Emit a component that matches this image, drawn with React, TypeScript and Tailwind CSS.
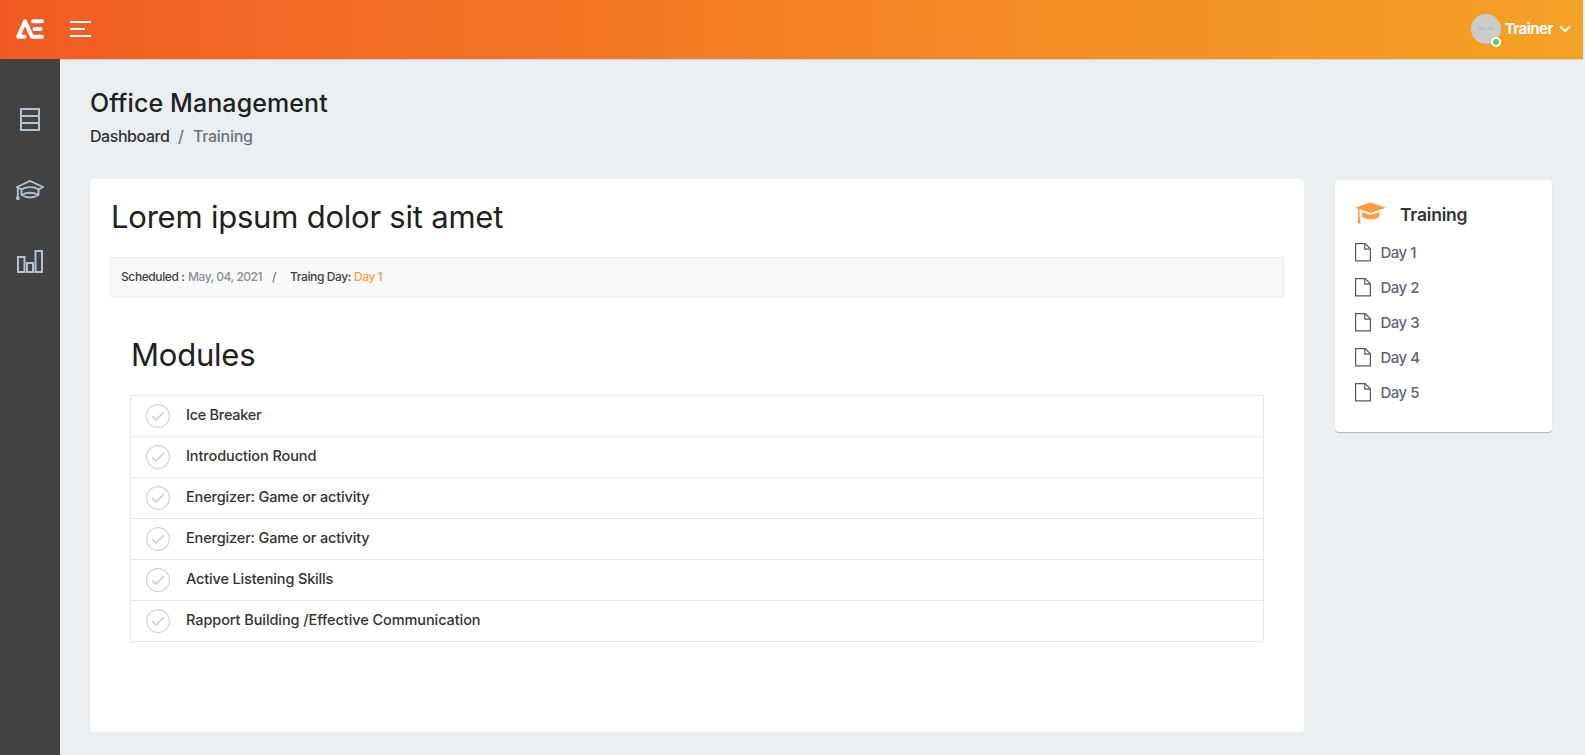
import React from "react";

const modules = [
  { name: "Ice Breaker", cls: "tracking-[-0.28px]" },
  { name: "Introduction Round", cls: "tracking-[-0.1px]" },
  { name: "Energizer: Game or activity", cls: "tracking-[-0.15px]" },
  { name: "Energizer: Game or activity", cls: "tracking-[-0.15px]" },
  { name: "Active Listening Skills", cls: "tracking-[-0.15px]" },
  { name: "Rapport Building /Effective Communication", cls: "tracking-[-0.08px]" },
];

const days = ["Day 1", "Day 2", "Day 3", "Day 4", "Day 5"];

function Logo() {
  return (
    <svg width="28" height="20" viewBox="0 0 28 20" fill="none" stroke="#fff" strokeWidth="4" strokeLinecap="round" strokeLinejoin="round">
      <path d="M8.500 17.7H2.2L9 2.4L16 17.7H26" />
      <path d="M17 2.3H26M18.5 10H24.5" />
    </svg>
  );
}

function FileIcon() {
  return (
    <svg width="16" height="19" viewBox="0 0 16 19" fill="none" stroke="#5a5a5a" strokeWidth="1.2">
      <path d="M0.6 0.6H10.2L15.4 5.8V17.9H0.6Z" />
      <path d="M9.8 0.6V6.2H15.4" />
    </svg>
  );
}

function CheckCircle() {
  return (
    <svg width="24" height="24" viewBox="0 0 24 24" fill="none" stroke="#cfcfcf">
      <circle cx="12" cy="12" r="11.4" strokeWidth="1.1" />
      <path d="M6.3 12.3L10 16L17.8 8.2" strokeWidth="1.7" />
    </svg>
  );
}

export default function App() {
  return (
    <div className="flex h-[755px] w-full flex-col overflow-hidden bg-[#ebeff2] font-['Inter',sans-serif] text-[#212121]">
      <header className="mr-0.5 flex h-[59px] shrink-0 items-center bg-linear-to-r from-[#f15a24] to-[#f4a226] pb-0.5 pl-4 pr-3 text-white">
        <Logo />
        <svg className="ml-[26px]" width="21" height="16" viewBox="0 0 21 16" fill="#fff">
          <path d="M0 0H21V2H0ZM0 7H15V9H0ZM0 14H21V16H0Z" />
        </svg>
        <div className="ml-auto flex items-center">
          <div className="relative h-[30px] w-[30px] rounded-full bg-[#ccc]">
            <span className="absolute left-0 top-3 w-full text-center text-[4px] leading-[6px] text-[#aaa]">30 x 30</span>
            <span className="absolute -bottom-[3px] right-0 h-2.5 w-2.5 rounded-full border-2 border-white bg-[#55ce63]" />
          </div>
          <span className="ml-1 text-[15px] font-bold leading-5 tracking-[-0.55px]">Trainer</span>
          <svg className="ml-1.5" width="12" height="8" viewBox="0 0 12 8" fill="none" stroke="#fff" strokeWidth="2">
            <path d="M1 1.2L6 6.2L11 1.2" />
          </svg>
        </div>
      </header>
      <div className="flex min-h-0 flex-1">
        <nav className="flex w-[60px] shrink-0 flex-col items-center bg-[#424242] pt-[49px] text-[#b3c2d1]">
          <svg width="20" height="23" viewBox="0 0 20 23" fill="none" stroke="currentColor" strokeWidth="2">
            <path d="M1 1H19V22H1ZM1 8H19M1 15H19" />
          </svg>
          <svg className="mt-[49px]" width="28" height="20" viewBox="0 0 28 20" fill="none" stroke="currentColor" strokeWidth="1.9">
            <path d="M1 7L14 1L27 7L23 9.3Q14 5 5.500 9.3Z" />
            <path d="M5.500 9V15Q14 20 22.500 15V9M5.500 15Q14 10.500 22.500 15M1.800 7V18" />
            <circle cx="1.800" cy="18.200" r="1" />
          </svg>
          <svg className="mt-[50px]" width="26" height="23" viewBox="0 0 26 23" fill="none" stroke="currentColor" strokeWidth="2">
            <path d="M1 22V7H7.500V22ZM10 22V13H16V22ZM18.500 22V1H25V22Z" />
          </svg>
        </nav>
        <main className="flex min-w-0 flex-1 flex-col border-t border-[#d2d2d2] px-[30px]">
          <h1 className="mt-[28px] text-[25px] font-medium leading-[30px] tracking-[0.1px]">Office Management</h1>
          <div className="mt-2 flex text-[16px] font-medium leading-5">
            <span className="w-[88px] tracking-[-0.45px] text-[#333]">Dashboard</span>
            <span className="w-[15px] text-[#6c757d]">/</span>
            <span className="tracking-[-0.3px] text-[#6c757d]">Training</span>
          </div>
          <div className="mt-[33px] flex items-start">
            <section className="h-[553px] w-[1214px] rounded bg-white px-5 pt-5">
              <h2 className="pl-px text-[31px] font-normal leading-9 tracking-[-0.22px]">Lorem ipsum dolor sit amet</h2>
              <div className="mt-[22px] flex h-10 items-center whitespace-nowrap border border-[#ededed] bg-[#f9f9f9] pl-2.5 text-[12px] font-medium text-[#424242]">
                <span className="w-[67px] tracking-[-0.4px]">Scheduled :</span>
                <span className="w-[84px] tracking-[-0.47px] text-[#888f96]">May, 04, 2021</span>
                <span className="w-[18px] text-[#6c757d]">/</span>
                <span className="w-[64px] tracking-[-0.38px]">Traing Day:</span>
                <span className="tracking-[-0.45px] text-[#ff9b44]">Day 1</span>
              </div>
              <div className="px-5 pt-10">
                <h2 className="pl-px text-[31px] font-normal leading-9 tracking-[-0.22px]">Modules</h2>
                <ul className="mt-[22px] border border-b-0 border-[#e7e7e7]">
                  {modules.map((m, i) => (
                    <li key={i} className="flex h-[41px] items-center border-b border-[#e7e7e7] pl-[15px]">
                      <CheckCircle />
                      <span className={"ml-4 pb-0.5 text-[14.5px] font-medium leading-5 text-[#333] " + m.cls}>{m.name}</span>
                    </li>
                  ))}
                </ul>
              </div>
            </section>
            <aside className="ml-[31px] mt-px h-[252px] w-[217px] rounded bg-white pl-5 pt-[19px] shadow-[0_1px_1px_0_rgba(0,0,0,0.25)]">
              <div className="flex items-center">
                <svg width="31" height="22" viewBox="0 0 31 22" fill="#ff9b44">
                  <path d="M15.500 0.500L31 5.800L15.500 11L5 7.400Q4.300 8.500 4.500 11L5.500 21.500H2.500L3.400 13L2.800 11.500L3.300 6.800L0 5.800Z" />
                  <path d="M7 10L15.500 13L24.500 10V15Q16 20 7 15Z" />
                </svg>
                <h3 className="ml-3.5 pt-1 text-[17.500px] font-semibold leading-6 tracking-[-0.2px] text-[#333]">Training</h3>
              </div>
              <ul className="mt-4">
                {days.map((d) => (
                  <li key={d} className="flex h-[35px] items-start text-[15px] font-medium text-[#5f6576]">
                    <FileIcon />
                    <span className="ml-[9.5px] mt-px leading-[18px] tracking-[-0.5px]">{d}</span>
                  </li>
                ))}
              </ul>
            </aside>
          </div>
        </main>
      </div>
    </div>
  );
}
